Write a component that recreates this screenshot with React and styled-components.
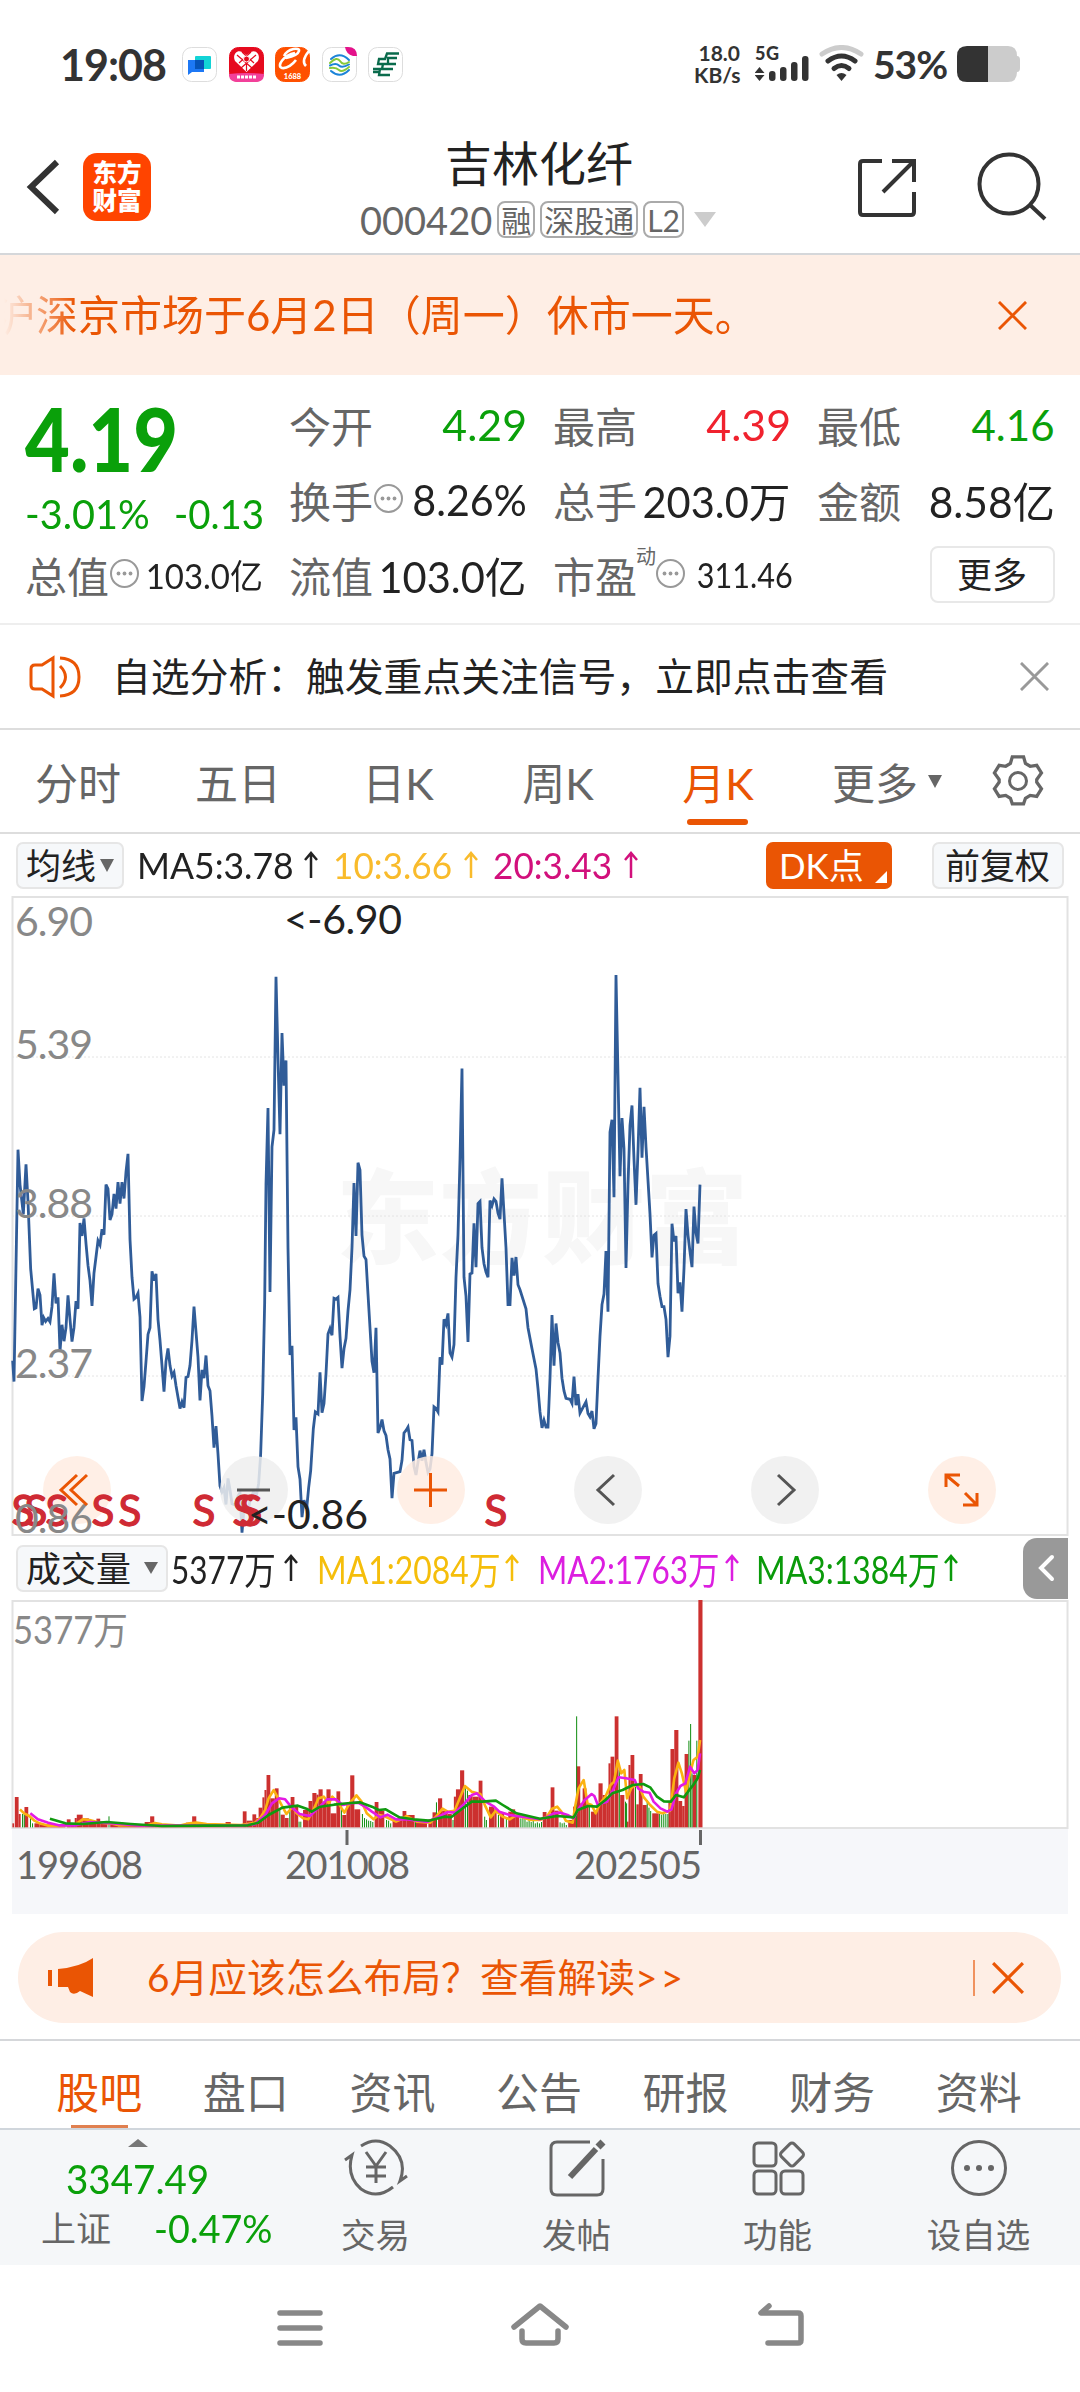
import React from "react"
import styled, { createGlobalStyle } from "styled-components"

const GlobalStyle = createGlobalStyle`
	* { box-sizing: border-box; }
	body {
		margin: 0;
		background: #fff;
		color: #333;
		font-family: Lato, "Noto Sans CJK SC", sans-serif;
	}
	svg { display: block; flex: none; }
`
const Screen = styled.div`
	width: 1080px;
	height: 2392px;
	overflow: hidden;
	white-space: nowrap;
	display: flex;
	flex-direction: column;
	& > * { flex: none; }
`
// digits narrower than the font draws them
const Num = styled.span`
	display: inline-block;
	width: ${p => p.$w}px;
	font-size: ${p => p.$size || 42}px;
	text-align: left;
	& > span {
		display: inline-block;
		transform: scaleX(${p => p.$k || 1});
		transform-origin: left center;
	}
`

/* status bar */
const StatusBar = styled.div`
	height: 130px;
	padding: 0 60px 2px 60px;
	display: flex;
	align-items: center;
	color: #333;
`
const Clock = styled.div`
	width: 122px;
	font-size: 43px;
	font-weight: 700;
	letter-spacing: -1px;
`
const AppIcons = styled.div`
	display: flex;
	gap: 11.5px;
	flex: 1;
`
const Speed = styled.div`
	width: 46px;
	margin-right: 15px;
	font-size: 21px;
	line-height: 22px;
	font-weight: 700;
	text-align: right;
`
const Battery = styled.div`
	font-size: 39px;
	font-weight: 700;
	width: 84px;
	letter-spacing: -1px;
	margin-left: 8px;
`

/* header */
const Header = styled.header`
	height: 125px;
	display: flex;
	align-items: center;
	border-bottom: 2px solid #d5d7da;
	padding: 0 32px 10px 25px;
`
const Logo = styled.div`
	width: 68px;
	height: 68px;
	margin-left: 22px;
	border-radius: 14px;
	background: #ff4400;
	color: #fff;
	font: 900 24.5px/28px "Noto Sans CJK SC", sans-serif;
	padding: 5px 8px 0;
	text-align: center;
	white-space: normal;
`
const HeaderTitle = styled.div`
	flex: 1;
	display: flex;
	flex-direction: column;
	align-items: center;
	margin-left: 67px;
	padding-top: 6px;
`
const StockName = styled.div`
	font-size: 47px;
	line-height: 60px;
	color: #222;
	padding-left: 2px;
`
const StockCode = styled.div`
	display: flex;
	align-items: center;
	height: 54px;
	font-size: 38px;
	color: #666;
`
const Badge = styled.span`
	height: 37px;
	line-height: 34px;
	border: 2px solid #aaa;
	border-radius: 8px;
	padding: 0 2px;
	margin-left: 5px;
	font-size: 30px;
`
const Caret = styled.i`
	display: inline-block;
	border: ${p => p.$w / 2}px solid transparent;
	border-top: ${p => p.$h}px solid ${p => p.$color || "#666"};
	border-bottom: 0;
`

/* notice + analysis */
const Notice = styled.div`
	height: 120px;
	background: #feeee5;
	display: flex;
	align-items: center;
	justify-content: space-between;
	padding-right: 53px;
	color: #ea5504;
	font-size: 42px;
`
const NoticeText = styled.div`
	text-indent: -6px;
	padding-bottom: 6px;
	mask-image: linear-gradient(to right, transparent 4px, #000 75px);
`
const Analysis = styled.div`
	height: 105px;
	display: flex;
	align-items: center;
	border-bottom: 2px solid #ddd;
	padding: 0 31px 0 28px;
	font-size: 38.8px;
	color: #222;
	& > div {
		flex: 1;
		margin-left: 31px;
		padding-bottom: 5px;
	}
`

/* quote */
const Quote = styled.section`
	height: 250px;
	padding: 12px 0 0 25px;
	display: grid;
	grid-template-columns: repeat(4, 237.500px);
	grid-auto-rows: 75px;
	column-gap: 26.500px;
	border-bottom: 2px solid #eee;
`
const PriceCell = styled.div`
	grid-row: span 2;
	color: #0aa00a;
`
const Price = styled.div`
	height: 101px;
	line-height: 102px;
	font-size: 88px;
	font-weight: 900;
`
const Change = styled.div`
	display: flex;
	justify-content: space-between;
	line-height: 52px;
`
const Cell = styled.div`
	display: flex;
	align-items: center;
	font-size: 42px;
	color: #666;
`
const Value = styled.span`
	flex: 1;
	display: flex;
	justify-content: flex-end;
	font-size: ${p => p.$size || 42}px;
	color: ${p => p.$color || "#222"};
	& > span {
		transform: scaleX(${p => p.$k || 1.02});
		transform-origin: right center;
	}
`
const Sup = styled.sup`
	font-size: 20px;
	line-height: 20px;
	align-self: flex-start;
	margin: 9px -1px 0 -1px;
`
const MoreButton = styled.button`
	width: 125px;
	height: 57px;
	margin-left: auto;
	border: 2px solid #e8e8e8;
	border-radius: 8px;
	background: #fff;
	font: 35px "Noto Sans CJK SC", sans-serif;
	line-height: 46px;
	padding: 0 0 4px;
	color: #222;
`

/* period tabs */
const Periods = styled.nav`
	height: 104px;
	display: flex;
	align-items: center;
	border-bottom: 2px solid #ddd;
	font-size: 43px;
	color: #666;
	margin-left: -2px;
`
const Period = styled.div`
	width: 160px;
	height: 100%;
	line-height: 107px;
	text-align: center;
	position: relative;
	color: ${p => (p.$active ? "#ea5504" : "#666")};
	&::after {
		content: "";
		display: ${p => (p.$active ? "block" : "none")};
		position: absolute;
		left: 49px;
		bottom: 7px;
		width: 61px;
		height: 6px;
		border-radius: 3px;
		background: #ea5504;
	}
`
const PeriodMore = styled.div`
	display: flex;
	align-items: center;
	gap: 10px;
	margin-left: 34px;
	margin-right: 50px;
`

/* indicators */
const IndicatorBar = styled.div`
	height: ${p => p.$h}px;
	display: flex;
	align-items: center;
	padding-left: 16px;
	color: #222;
`
const Chip = styled.div`
	width: ${p => p.$w}px;
	height: 47px;
	display: flex;
	align-items: center;
	justify-content: space-between;
	padding: 0 8px;
	line-height: 40px;
	background: ${p => (p.$hot ? "#ea5504" : "#f6f8fa")};
	color: ${p => (p.$hot ? "#fff" : "#222")};
	border: ${p => (p.$hot ? "0" : "2px solid #e6e6e6")};
	border-radius: 7px;
	font-size: 35px;
`
const Ma = styled.div`
	color: ${p => p.$color};
	width: ${p => p.$w}px;
	display: flex;
	align-items: center;
	padding-bottom: 2px;
`
const Corner = styled.i`
	align-self: flex-end;
	margin-bottom: 6px;
	border: 6px solid #fff;
	border-top-color: transparent;
	border-left-color: transparent;
`
const Collapse = styled.div`
	width: 45px;
	height: 61px;
	margin-left: auto;
	margin-right: 12px;
	border-radius: 14px 0 0 14px;
	background: #999;
	display: flex;
	align-items: center;
	justify-content: center;
`

/* charts */
const ChartBox = styled.div`
	position: relative;
	height: 640px;
`
const Tools = styled.div`
	position: absolute;
	left: 43px;
	top: 560px;
	display: flex;
	gap: 109px;
`
const Tool = styled.div`
	width: 68px;
	height: 68px;
	border-radius: 50%;
	background: ${p => (p.$hot ? "rgba(255, 236, 226, .85)" : "rgba(239, 239, 239, .85)")};
`
const Axis = styled.div`
	height: 85px;
	margin: 0 12px 0 12px;
	background: #f6f7fa;
`

/* promo + bottom */
const Promo = styled.div`
	height: 91px;
	margin: 18px 19px 16px 18px;
	border-radius: 46px;
	background: #feeee5;
	color: #ea5504;
	font-size: 38.8px;
	display: flex;
	align-items: center;
	padding: 0 37px 0 28px;
	& > div {
		flex: 1;
		margin-left: 53px;
		padding-bottom: 5px;
	}
`
const Divider = styled.i`
	width: 2px;
	height: 36px;
	background: #f0925f;
	margin-right: 17px;
`
const Sections = styled.nav`
	height: 91px;
	padding: 0 28px 0 26px;
	display: grid;
	grid-template-columns: repeat(7, 1fr);
	border-top: 2px solid #d5d7da;
	border-bottom: 2px solid #d0d6dc;
`
const Section = styled.div`
	font-size: 43px;
	line-height: 103px;
	height: 89px;
	text-align: center;
	color: ${p => (p.$active ? "#ea5504" : "#666")};
	background: ${p => (p.$active ? "linear-gradient(#e08050, #e08050) center bottom 2px / 57px 3px no-repeat" : "none")};
`
const BottomBar = styled.div`
	height: 135px;
	background: #f5f7f9;
	display: flex;
	color: #666;
`
const IndexCell = styled.div`
	width: 275px;
	display: flex;
	flex-direction: column;
	align-items: center;
	color: #0aa00a;
	padding-top: 9px;
`
const UpCaret = styled.i`
	border: 10px solid transparent;
	border-bottom: 8px solid #777;
	border-top: 0;
`
const IndexRow = styled.div`
	display: flex;
	align-items: center;
	line-height: ${p => p.$lh}px;
`
const IndexName = styled.span`
	font-size: 35px;
	color: #666;
	margin-right: 43px;
`
const Action = styled.div`
	width: 201px;
	display: flex;
	flex-direction: column;
	align-items: center;
	padding-top: 8px;
	font-size: 34.5px;
	line-height: 44px;
	& > svg { margin-bottom: 15px; }
`
const NavBar = styled.div`
	height: 127px;
	display: flex;
	justify-content: center;
	gap: 180px;
	padding-top: 32px;
`

const Line = props => <g fill="none" stroke="currentColor" strokeWidth="3" {...props} />

const Close = ({ size = 29, color = "#ea5504", w = 3 }) => (
	<svg width={size} height={size} viewBox="0 0 30 30">
		<path d="M1 1L29 29M29 1L1 29" stroke={color} strokeWidth={w} />
	</svg>
)

const Dots = () => (
	<svg width="31" height="31" viewBox="0 0 31 31">
		<circle cx="15.500" cy="12.500" r="13.500" transform="translate(0 2)" fill="none" stroke="#999" strokeWidth="2" />
		<g fill="#999">
			<circle cx="9.500" cy="14.500" r="1.900" />
			<circle cx="15.500" cy="14.500" r="1.900" />
			<circle cx="21.500" cy="14.500" r="1.900" />
		</g>
	</svg>
)

const Up = ({ size = 27 }) => (
	<svg width="14" height={size} viewBox="0 0 14 27" fill="none" stroke="currentColor" strokeWidth="2.500">
		<path d="M7 27V2M1 9L7 2L13 9" />
	</svg>
)

const AppTile = ({ fill = "#fff", children }) => (
	<svg width="35" height="35" viewBox="0 0 35 35">
		<rect x=".5" y=".5" width="34" height="34" rx="9" fill={fill} stroke={fill === "#fff" ? "#ddd" : fill} />
		{children}
	</svg>
)

const StatusIcons = () => (
	<AppIcons>
		<AppTile>
			<path d="M6 13h16v12H10l-4 3z" fill="#1d78f5" />
			<rect x="13" y="9" width="16" height="13" rx="1" fill="#12d3d6" />
			<rect x="13" y="13" width="9" height="9" fill="#0553b8" />
		</AppTile>
		<AppTile fill="#e60a1e">
			<path d="M17.500 25L6 14C3 8 8 2 13 5l4.500 3L22 5c5-3 10 3 7 9z" fill="#fff" />
			<path d="M8 8l15 13M27 8L12 21M13 5l12 11M22 5L10 16M17.500 8v16" stroke="#e60a1e" strokeWidth="1.200" />
			<circle cx="17.500" cy="12" r="3" fill="#e60a1e" stroke="#fff" />
			<path d="M0 27q17-2 35 0v2q-1 6-9 6H9q-8 0-9-6z" fill="#f2409a" />
			<path d="M8 30h20" stroke="#fff" strokeWidth="3" strokeDasharray="3 1" />
		</AppTile>
		<AppTile fill="#ff5000">
			<path d="M9 9C13 1 25 0 24 4c-1 4-8 6-13 7M20 6C9 8 1 19 7 21c5 1 11-4 14-8M34 4c-5 6-7 11-3 15" fill="none" stroke="#fff" strokeWidth="2.600" />
			<text x="17.500" y="32" fontSize="7.500" fontWeight="900" fill="#fff" textAnchor="middle">1688</text>
		</AppTile>
		<AppTile>
			<g fill="none" strokeWidth="2" strokeLinecap="round">
				<path d="M9 12q9-8 18 1M9 24q9 8 18-1" stroke="#1c84d8" />
				<path d="M8 16q7-7 10-2t9 1M8 21q6-1 9 2t10-3" stroke="#86c83c" />
				<path d="M8 18.500q6-3 9 0t10-1" stroke="#1c84d8" />
			</g>
			<path d="M23 0h3q9 0 9 9h-4q-7-2-8-9z" fill="#e4128a" />
		</AppTile>
		<AppTile>
			<g fill="none" stroke="#0a6b4c" strokeWidth="2.300">
				<path d="M31 6.500H19L17 12h-6l-1 5h17M29 11H20v6M28 17H15l-1 5H5M25 22H12l-1 6h11M5 25h7" />
			</g>
		</AppTile>
	</AppIcons>
)

const Signal = () => (
	<svg width="110" height="38" viewBox="0 0 110 38">
		<text x="0" y="15" fontSize="18" fontWeight="900" fill="#333" textLength="24">5G</text>
		<g fill="#333">
			<path d="M4.500 22l5 6h-10zM4.500 36l5-6h-10z" />
			<rect x="14" y="26" width="6.500" height="10" rx="3" />
			<rect x="25" y="22" width="6.500" height="14" rx="3" />
			<rect x="36" y="17" width="6.500" height="19" rx="3" />
			<rect x="47" y="11" width="6.500" height="25" rx="3" />
			<path d="M86.500 36l-5-6q5-4 10 0z" />
		</g>
		<g fill="none" strokeLinecap="round" strokeWidth="5">
			<path d="M67 9q19.500-13 39 0" stroke="#ccc" />
			<path d="M73 16q13.500-10 27 0M79 23.500q7.500-6 15 0" stroke="#333" />
		</g>
	</svg>
)

const CLOSE_LINE = "38,1118 42,1168 54,617 60,700 70,770 78,652 84,740 92,900 103,995 108,993 114,947 120,962 126,1034 131,1016 137,1025 144,1018 150,1026 156,990 162,911 168,982 174,968 180,1096 186,1033 192,1072 198,1040 204,963 210,1020 216,1073 222,1040 228,977 234,995 240,791 246,822 252,780 258,840 264,892 270,928 276,988 282,910 288,872 294,833 300,843 306,806 312,819 318,700 324,710 330,784 336,770 342,722 348,757 354,694 360,745 366,694 372,733 378,670 384,627 390,830 396,920 402,972 408,968 414,958 420,1015 426,1214 432,1180 438,1120 444,1056 450,1040 456,906 462,928 468,912 474,1020 480,1070 486,1130 492,1192 498,1120 504,1089 510,1130 516,1155 522,1146 528,1178 534,1205 540,1232 546,1216 552,1230 558,1158 564,1156 570,1130 576,1070 582,990 588,1050 594,1110 600,1213 606,1140 612,1160 618,1106 624,1178 630,1190 636,1250 642,1325 648,1274 654,1340 660,1416 666,1430 672,1420 678,1460 684,1398 690,1425 696,1458 702,1460 708,1458 714,1440 720,1432 726,1527 732,1470 738,1464 744,1478 750,1450 760,1430 770,1436 776,1410 782,1340 788,1200 794,980 798,700 804,518 810,955 816,610 822,570 828,206 834,400 840,580 846,340 852,465 858,405 864,850 870,1105 876,1083 882,1283 888,1253 894,1370 900,1400 906,1490 912,1450 920,1470 926,1420 932,1380 940,1280 946,1240 954,1245 960,1146 966,1242 972,1220 978,1150 984,1055 990,1042 996,1058 1002,970 1008,972 1014,968 1020,1060 1026,1136 1032,1090 1038,1065 1044,1000 1050,950 1056,850 1062,696 1068,822 1074,648 1080,665 1086,820 1092,870 1098,878 1104,960 1110,1040 1116,1120 1122,1147 1128,1040 1134,1290 1140,1278 1146,1258 1152,1285 1158,1296 1164,1330 1170,1352 1176,1445 1182,1386 1200,1382 1206,1355 1212,1290 1218,1284 1224,1276 1230,1306 1236,1308 1242,1370 1248,1390 1254,1360 1260,1332 1266,1356 1272,1330 1278,1360 1284,1384 1290,1376 1296,1340 1302,1228 1308,1232 1314,1240 1320,1110 1326,1128 1332,1020 1338,1032 1344,1006 1350,1100 1356,1110 1362,1080 1368,920 1374,820 1380,640 1386,424 1392,920 1398,965 1404,1074 1410,912 1416,910 1422,792 1428,896 1434,745 1440,740 1446,850 1452,888 1458,908 1464,920 1470,738 1476,750 1482,734 1488,740 1494,768 1500,782 1506,685 1512,768 1518,850 1524,985 1530,985 1536,874 1542,916 1548,872 1554,938 1560,950 1578,995 1584,1040 1596,1090 1608,1138 1614,1185 1620,1240 1626,1278 1632,1260 1638,1276 1644,1276 1650,1160 1656,1010 1662,1130 1668,1030 1674,1075 1680,1100 1686,1160 1692,1190 1698,1208 1710,1210 1716,1220 1722,1156 1728,1224 1734,1198 1740,1243 1758,1216 1764,1244 1770,1252 1776,1238 1782,1280 1788,1268 1794,1160 1800,1060 1806,985 1812,960 1818,858 1824,1002 1830,575 1836,546 1842,730 1848,202 1854,440 1860,680 1866,542 1872,615 1878,898 1884,700 1890,560 1896,512 1902,640 1908,748 1914,620 1920,470 1926,636 1932,515 1938,610 1944,690 1950,770 1956,873 1962,820 1968,816 1974,935 1980,965 1986,990 1992,990 1998,1020 2004,1110 2010,1060 2016,793 2022,835 2028,822 2034,958 2040,932 2046,1002 2052,900 2058,758 2064,820 2070,860 2076,896 2082,752 2088,815 2094,840 2100,700"

const SELL_MARKS = [23, 36, 57, 103, 130, 204, 244, 251, 496]

const PriceChart = () => (
	<svg width="1080" height="640" viewBox="0 896 1080 640">
		<text x="336" y="1256" fontFamily="Noto Sans CJK SC" fontWeight="900" fontSize="102" fill="#f7f7f7" textLength="412" lengthAdjust="spacingAndGlyphs">东方财富</text>
		<path d="M12 1057H1067M12 1216H1067M12 1376H1067" stroke="#e4e4e4" strokeDasharray="2 2" />
		<rect x="12.500" y="897" width="1055" height="638" fill="none" stroke="#e2e2e2" strokeWidth="2" />
		<polyline
			points={CLOSE_LINE}
			transform="translate(0 890) scale(.33333 .42088)"
			fill="none"
			stroke="#305c98"
			strokeWidth="2.800"
			vectorEffect="non-scaling-stroke"
		/>
	</svg>
)

const PriceLabels = styled.svg`
	position: absolute;
	left: 0;
	top: 0;
`

const ChartText = () => (
	<PriceLabels width="1080" height="640" viewBox="0 896 1080 640" fontSize="41">
		<g fill="#cf2a34" stroke="#cf2a34" strokeWidth="1.300" fontSize="42">
			{SELL_MARKS.map(x => <text key={x} x={x} y="1526" textAnchor="middle">S</text>)}
		</g>
		<g fill="#888">
			<text x="15" y="936" textLength="78">6.90</text>
			<text x="15" y="1059" textLength="78">5.39</text>
			<text x="15" y="1218" textLength="78">3.88</text>
			<text x="15" y="1378" textLength="78">2.37</text>
			<text x="15" y="1533" textLength="78">0.86</text>
		</g>
		<g fill="#222">
			<text x="284" y="934" textLength="118">&lt;-6.90</text>
			<text x="248" y="1529" textLength="120">&lt;-0.86</text>
		</g>
		<Line stroke="#ea5504">
			<path d="M77 1475L61 1490L77 1505M87 1475L71 1490L87 1505" />
			<path d="M237 1490H270" stroke="#555" />
			<path d="M414 1490H447M430.500 1473V1507" />
			<path d="M614 1475L598 1490L614 1505M778 1475L794 1490L778 1505" stroke="#555" />
			<path d="M946 1487V1475H960M947 1476L959 1486M977 1493V1505H963M965 1493L976 1504" />
		</Line>
	</PriceLabels>
)

// [from, to, top] on a baseline of 862
const RED_BARS = [
	[36, 41, 850], [43, 54, 771], [54, 60, 822], [71, 82, 801], [100, 115, 850], [115, 190, 853], [194, 205, 838], [205, 217, 850], [217, 223, 834], [223, 240, 824],
	[240, 258, 835], [258, 280, 848], [280, 291, 836], [291, 312, 846], [320, 345, 850], [345, 420, 854], [420, 436, 846], [436, 448, 829],
	[448, 540, 855], [540, 558, 848], [558, 570, 829], [570, 655, 853], [655, 670, 846], [670, 705, 854], [705, 716, 814], [716, 733, 842],
	[733, 744, 823], [744, 751, 834], [751, 762, 803], [762, 768, 772], [768, 774, 750], [774, 785, 705], [785, 798, 775], [798, 809, 745],
	[815, 827, 824], [827, 838, 834], [844, 855, 771], [855, 866, 800], [880, 896, 810], [896, 907, 783], [907, 919, 759], [919, 925, 764],
	[925, 937, 748], [937, 948, 785], [948, 960, 748], [960, 977, 820], [977, 988, 754], [994, 1006, 825], [1006, 1017, 790],
	[1017, 1029, 706], [1029, 1046, 808], [1088, 1099, 786], [1099, 1116, 812], [1140, 1169, 838], [1169, 1180, 813], [1180, 1204, 825],
	[1208, 1240, 845], [1244, 1256, 838], [1256, 1266, 817], [1272, 1284, 775], [1284, 1300, 812], [1300, 1312, 822], [1318, 1324, 770],
	[1324, 1336, 748], [1336, 1348, 691], [1360, 1372, 765], [1372, 1390, 770], [1390, 1401, 722], [1420, 1436, 800], [1436, 1442, 808],
	[1452, 1464, 820], [1476, 1484, 815], [1484, 1496, 808], [1496, 1508, 830], [1576, 1587, 816], [1587, 1599, 824], [1599, 1610, 742],
	[1610, 1622, 812], [1650, 1664, 840], [1664, 1674, 800], [1674, 1685, 679], [1685, 1692, 790], [1692, 1703, 745], [1703, 1709, 790],
	[1716, 1733, 815], [1733, 1738, 790], [1738, 1750, 730], [1750, 1762, 765], [1762, 1768, 780], [1767, 1773, 670], [1773, 1784, 650],
	[1785, 1796, 529], [1801, 1813, 765], [1820, 1825, 845], [1825, 1831, 675], [1831, 1842, 645], [1848, 1855, 793], [1855, 1866, 702],
	[1866, 1878, 795], [1894, 1913, 820], [1941, 1948, 788], [1947, 1958, 627], [1958, 1970, 570], [1970, 1981, 783], [1981, 1988, 798],
	[1988, 1999, 642], [2011, 2022, 705], [2028, 2040, 180],
]
const GREEN_BARS = [
	[65, 822], [70, 822], [88, 830], [94, 850], [316, 829], [812, 805], [841, 800], [868, 845], [873, 845], [991, 795], [1052, 822], [1058, 834],
	[1064, 838], [1070, 842], [1076, 843], [1082, 846], [1122, 840], [1128, 842], [1134, 850], [1206, 840], [1267, 787], [1315, 840], [1351, 745],
	[1357, 752], [1407, 830], [1412, 840], [1447, 825], [1470, 835], [1512, 835], [1518, 832], [1524, 836], [1530, 845], [1536, 838], [1542, 846],
	[1548, 842], [1554, 850], [1560, 847], [1566, 850], [1572, 846], [1626, 847], [1632, 850], [1638, 848], [1644, 855], [1674, 529], [1711, 800],
	[1798, 690], [1816, 785], [1819, 790], [1845, 740], [1879, 780], [1884, 803], [1889, 813], [1915, 822], [1921, 824], [1927, 820], [1933, 822],
	[1939, 822], [2000, 602], [2005, 552], [2023, 602], [2009, 700],
]
const MA_LINES = [
	["#fbb211", "58,808 70,820 85,828 100,842 115,850 140,857 180,858 220,852 240,838 260,840 290,848 320,850 345,856 430,855 450,849 470,853 520,857 550,850 570,848 600,852 700,855 740,848 755,835 770,810 780,775 795,750 805,770 820,800 832,822 850,800 860,818 880,835 895,838 910,810 925,775 940,770 955,790 965,770 980,785 1000,818 1015,790 1035,766 1050,785 1065,820 1085,838 1100,825 1115,828 1150,845 1165,838 1180,828 1210,845 1250,848 1270,825 1285,806 1300,815 1320,812 1335,775 1350,738 1370,755 1395,762 1410,800 1425,832 1440,812 1460,830 1480,838 1500,825 1540,840 1568,840 1588,830 1603,806 1618,800 1630,815 1643,842 1663,848 1670,800 1680,745 1695,720 1706,790 1718,795 1730,820 1743,790 1758,770 1773,735 1783,725 1794,662 1804,700 1813,690 1821,775 1833,745 1843,735 1858,740 1868,770 1888,795 1908,815 1923,820 1946,812 1958,715 1970,668 1980,700 1992,755 2004,700 2014,660 2026,650 2033,600"],
	["#e41ae4", "88,820 110,838 140,848 170,856 220,856 260,846 330,850 400,856 700,857 740,853 770,825 790,790 810,775 828,778 845,800 870,822 900,828 920,808 950,778 975,778 995,795 1020,790 1040,788 1060,800 1080,815 1105,832 1125,824 1150,838 1180,838 1240,846 1270,832 1300,816 1320,818 1345,795 1370,765 1385,760 1410,785 1435,800 1450,815 1480,825 1500,828 1568,838 1588,832 1608,820 1628,818 1648,825 1666,835 1678,810 1698,780 1718,762 1726,768 1736,795 1748,790 1763,785 1778,755 1796,712 1818,715 1843,720 1853,745 1868,755 1886,758 1898,785 1918,805 1938,815 1950,808 1963,760 1976,738 1990,730 2004,680 2016,700 2026,690 2033,640"],
	["#109a10", "145,836 190,850 240,852 310,846 380,852 470,858 600,857 720,856 750,848 780,825 820,803 865,797 890,806 905,815 930,800 970,794 1010,790 1045,787 1080,800 1100,810 1120,808 1160,832 1200,838 1245,842 1290,830 1310,832 1340,808 1370,785 1400,785 1440,782 1460,795 1500,820 1568,836 1618,828 1666,832 1678,810 1708,798 1733,800 1758,780 1778,760 1808,750 1838,735 1868,732 1888,742 1908,770 1928,784 1948,785 1963,765 1986,772 1998,755 2013,735 2026,715 2033,690"],
]

const VolumeChart = () => (
	<svg width="1080" height="229" viewBox="0 1600 1080 229">
		<rect x="12.500" y="1601" width="1055" height="227" fill="none" stroke="#e2e2e2" strokeWidth="2" />
		<text x="13" y="1644" fontSize="38" fill="#888" textLength="115" lengthAdjust="spacingAndGlyphs">5377万</text>
		<g transform="translate(0 1540) scale(.34436 .33333)">
			{RED_BARS.map(([a, b, top]) => <rect key={a} x={a} y={top} width={b - a} height={862 - top} fill="#cc302f" />)}
			{GREEN_BARS.map(([x, top]) => <rect key={x} x={x - 1} y={top} width="3" height={862 - top} fill="#179017" />)}
			{MA_LINES.map(([color, points]) => (
				<polyline key={color} points={points} fill="none" stroke={color} strokeWidth="2.600" strokeLinejoin="round" vectorEffect="non-scaling-stroke" />
			))}
		</g>
	</svg>
)

const MaValue = ({ color, w, tw, k, size, children }) => (
	<Ma $color={color} $w={w}>
		<Num $w={tw} $size={size} $k={k}><span>{children}</span></Num>
		<Up />
	</Ma>
)

const SECTIONS = ["股吧", "盘口", "资讯", "公告", "研报", "财务", "资料"]
const PERIODS = ["分时", "五日", "日K", "周K", "月K"]
const GREEN = "#0aa00a"

class App extends React.Component {
	render() {
		return (
			<Screen>
				<GlobalStyle />
				<StatusBar>
					<Clock>19:08</Clock>
					<StatusIcons />
					<Speed>18.0<br />KB/s</Speed>
					<Signal />
					<Battery>53%</Battery>
					<svg width="63" height="36" viewBox="0 0 63 36">
						<path d="M31 0h20q9 0 9 10 3 0 3 4v8q0 4-3 4 0 10-9 10H31z" fill="#ccc" />
						<path d="M31 0H10Q0 0 0 10v16q0 10 10 10h21z" fill="#333" />
					</svg>
				</StatusBar>
				<Header>
					<svg width="36" height="60" viewBox="0 0 36 60">
						<path d="M32 5L6 30L32 55" fill="none" stroke="#333" strokeWidth="6" />
					</svg>
					<Logo>东方财富</Logo>
					<HeaderTitle>
						<StockName>吉林化纤</StockName>
						<StockCode>
							000420
							<Badge>融</Badge>
							<Badge>深股通</Badge>
							<Badge>L2</Badge>
							<Caret $w={22} $h={15} $color="#ccc" style={{ marginLeft: 10 }} />
						</StockCode>
					</HeaderTitle>
					<svg width="190" height="70" viewBox="0 0 190 70">
						<Line stroke="#333" strokeWidth="4">
							<path d="M24 9H5Q2 9 2 12V60Q2 63 5 63H53Q56 63 56 60V40M34 9H56V30M55 10L25 40" />
							<circle cx="151" cy="32" r="29.500" />
							<path d="M171 52L187 67" />
						</Line>
					</svg>
				</Header>
				<Notice>
					<NoticeText>沪深京市场于6月2日（周一）休市一天。</NoticeText>
					<Close />
				</Notice>
				<Quote>
					<PriceCell>
						<Price><Num $w={170} $size={88} $k={0.88}><span>4.19</span></Num></Price>
						<Change>
							<Num $w={130} $size={40} $k={0.99}><span>-3.01%</span></Num>
							<Num $w={89} $size={40} $k={0.96}><span>-0.13</span></Num>
						</Change>
					</PriceCell>
					<Cell>今开<Value $color={GREEN}><span>4.29</span></Value></Cell>
					<Cell>最高<Value $color="#f0222e"><span>4.39</span></Value></Cell>
					<Cell>最低<Value $color={GREEN} $k={1}><span>4.16</span></Value></Cell>
					<Cell>换手<Dots /><Value $k={0.98}><span>8.26%</span></Value></Cell>
					<Cell>总手<Value $k={0.99}><span>203.0万</span></Value></Cell>
					<Cell>金额<Value $k={1.01}><span>8.58亿</span></Value></Cell>
					<Cell>总值<Dots /><Value $size={34} $k={0.97}><span>103.0亿</span></Value></Cell>
					<Cell>流值<Value $k={0.99}><span>103.0亿</span></Value></Cell>
					<Cell>市盈<Sup>动</Sup><Dots /><Value $size={34} $k={0.9}><span>311.46</span></Value></Cell>
					<Cell><MoreButton>更多</MoreButton></Cell>
				</Quote>
				<Analysis>
					<svg width="53" height="44" viewBox="0 0 53 44">
						<Line stroke="#ea5504">
							<path d="M25 3L14 10H7Q3 10 3 14V30Q3 34 7 34H14L25 41ZM32 11Q43 22 32 33M32 3Q51 4 51 22T32 41" />
						</Line>
					</svg>
					<div>自选分析：触发重点关注信号，立即点击查看</div>
					<Close color="#999" />
				</Analysis>
				<Periods>
					{PERIODS.map(p => <Period key={p} $active={p === "月K"}>{p}</Period>)}
					<PeriodMore>更多<Caret $w={15} $h={13} /></PeriodMore>
					<svg width="52" height="54" viewBox="0 0 52 54">
						<Line stroke="#666">
							<path d="M20 2h12l2 7 5 3 7-1 5 8-5 7v3l5 7-5 8-7-1-5 3-2 6H20l-2-6-5-3-7 1-5-8 5-7v-3l-5-7 5-8 7 1 5-3z" transform="translate(1.500 1) scale(.94)" strokeWidth="3.500" />
							<circle cx="26" cy="27" r="8.500" />
						</Line>
					</svg>
				</Periods>
				<IndicatorBar $h={62}>
					<Chip $w={108}>均线<Caret $w={14} $h={13} /></Chip>
					<i style={{ width: 13 }} />
					<MaValue color="#222" w={196} tw={167} size={37} k={0.96}>MA5:3.78</MaValue>
					<MaValue color="#f9bb2b" w={160} tw={131} size={37} k={0.95}>10:3.66</MaValue>
					<MaValue color="#d2107c" w={273} tw={131} size={37} k={0.95}>20:3.43</MaValue>
					<Chip $w={126} $hot style={{ padding: "0 5px 0 13px" }}>DK点<Corner /></Chip>
					<Chip $w={132} style={{ marginLeft: 40, padding: "0 11px" }}>前复权</Chip>
				</IndicatorBar>
				<ChartBox>
					<PriceChart />
					<Tools>
						<Tool $hot /><Tool /><Tool $hot /><Tool /><Tool /><Tool $hot />
					</Tools>
					<ChartText />
				</ChartBox>
				<IndicatorBar $h={64}>
					<Chip $w={152}>成交量<Caret $w={14} $h={12} /></Chip>
					<i style={{ width: 3 }} />
					<MaValue color="#222" w={146} tw={113} size={38} k={0.83}>5377万</MaValue>
					<MaValue color="#f5be0b" w={221} tw={188} size={38} k={0.84}>MA1:2084万</MaValue>
					<MaValue color="#dc1ee0" w={218} tw={187} size={38} k={0.83}>MA2:1763万</MaValue>
					<MaValue color="#0a9a0a" w={220} tw={188} size={38} k={0.84}>MA3:1384万</MaValue>
					<Collapse>
						<svg width="18" height="28" viewBox="0 0 18 28">
							<path d="M15 3L4 14L15 25" fill="none" stroke="#fff" strokeWidth="4" strokeLinecap="round" />
						</svg>
					</Collapse>
				</IndicatorBar>
				<VolumeChart />
				<Axis>
					<svg width="1056" height="85" fontSize="38" fill="#666">
						<path d="M335 1V16M688.500 1V16" stroke="#666" strokeWidth="3" />
						<text x="4" y="50" textLength="127">199608</text>
						<text x="273" y="50" textLength="125">201008</text>
						<text x="562" y="50" textLength="128">202505</text>
					</svg>
				</Axis>
				<Promo>
					<svg width="48" height="40" viewBox="0 0 48 40" fill="#ea5504">
						<path d="M47 0V39L34 33Q28 38 24 34L22 29H12V11Q34 9 47 0ZM2 12H6V28H2Z" />
					</svg>
					<div>6月应该怎么布局？查看解读<span style={{ letterSpacing: 3 }}>&gt;&gt;</span></div>
					<Divider />
					<Close size={32} />
				</Promo>
				<Sections>
					{SECTIONS.map((s, i) => <Section key={s} $active={i === 0}>{s}</Section>)}
				</Sections>
				<BottomBar>
					<IndexCell>
						<UpCaret />
						<IndexRow $lh={64}><Num $w={143} $size={41} $k={0.94}><span>3347.49</span></Num></IndexRow>
						<IndexRow $lh={34} style={{ marginLeft: 40 }}>
							<IndexName>上证</IndexName>
							<Num $w={120} $size={38} $k={0.99}><span>-0.47%</span></Num>
						</IndexRow>
					</IndexCell>
					<Action>
						<svg width="66" height="60" viewBox="0 0 66 60">
							<Line>
								<path d="M18 8Q33-2 47 8Q65 22 57 43L64 38M50 49Q34 62 18 51Q3 38 9 17L2 22M33 30V45M23 14L33 28L43 14M23 29H43M23 38H43" />
							</Line>
						</svg>
						交易
					</Action>
					<Action>
						<svg width="58" height="60" viewBox="0 0 58 60">
							<Line>
								<path d="M42 4H9Q3 4 3 10V51Q3 57 9 57H49Q55 57 55 51V21" />
								<path d="M22 39L48 11" strokeWidth="6" />
								<path d="M50 9L55 4" strokeWidth="7" />
							</Line>
						</svg>
						发帖
					</Action>
					<Action>
						<svg width="56" height="60" viewBox="0 0 56 60">
							<Line>
								<rect x="4" y="5" width="22" height="23" rx="4" />
								<rect x="4" y="33" width="22" height="23" rx="4" />
								<rect x="31" y="33" width="22" height="23" rx="4" />
								<rect x="33" y="7.500" width="18" height="18" rx="3" transform="rotate(45 42 16.500)" />
							</Line>
						</svg>
						功能
					</Action>
					<Action>
						<svg width="60" height="60" viewBox="0 0 60 60">
							<Line><circle cx="30" cy="30" r="26.500" /></Line>
							<g fill="#666">
								<circle cx="18" cy="30" r="3" />
								<circle cx="30" cy="30" r="3" />
								<circle cx="42" cy="30" r="3" />
							</g>
						</svg>
						设自选
					</Action>
				</BottomBar>
				<NavBar>
					{["M10 16H50M10 31H50M10 46H50", "M4 30L30 9L56 30M12 34V42Q12 46 16 46H44Q48 46 48 42V34", "M19 9L11 16H48Q51 16 51 19V43Q51 46 48 46H18"].map(d => (
						<svg key={d} width="60" height="60" viewBox="0 0 60 60">
							<path d={d} fill="none" stroke="#888" strokeWidth="5.500" strokeLinecap="round" strokeLinejoin="round" />
						</svg>
					))}
				</NavBar>
			</Screen>
		)
	}
}

export default App
